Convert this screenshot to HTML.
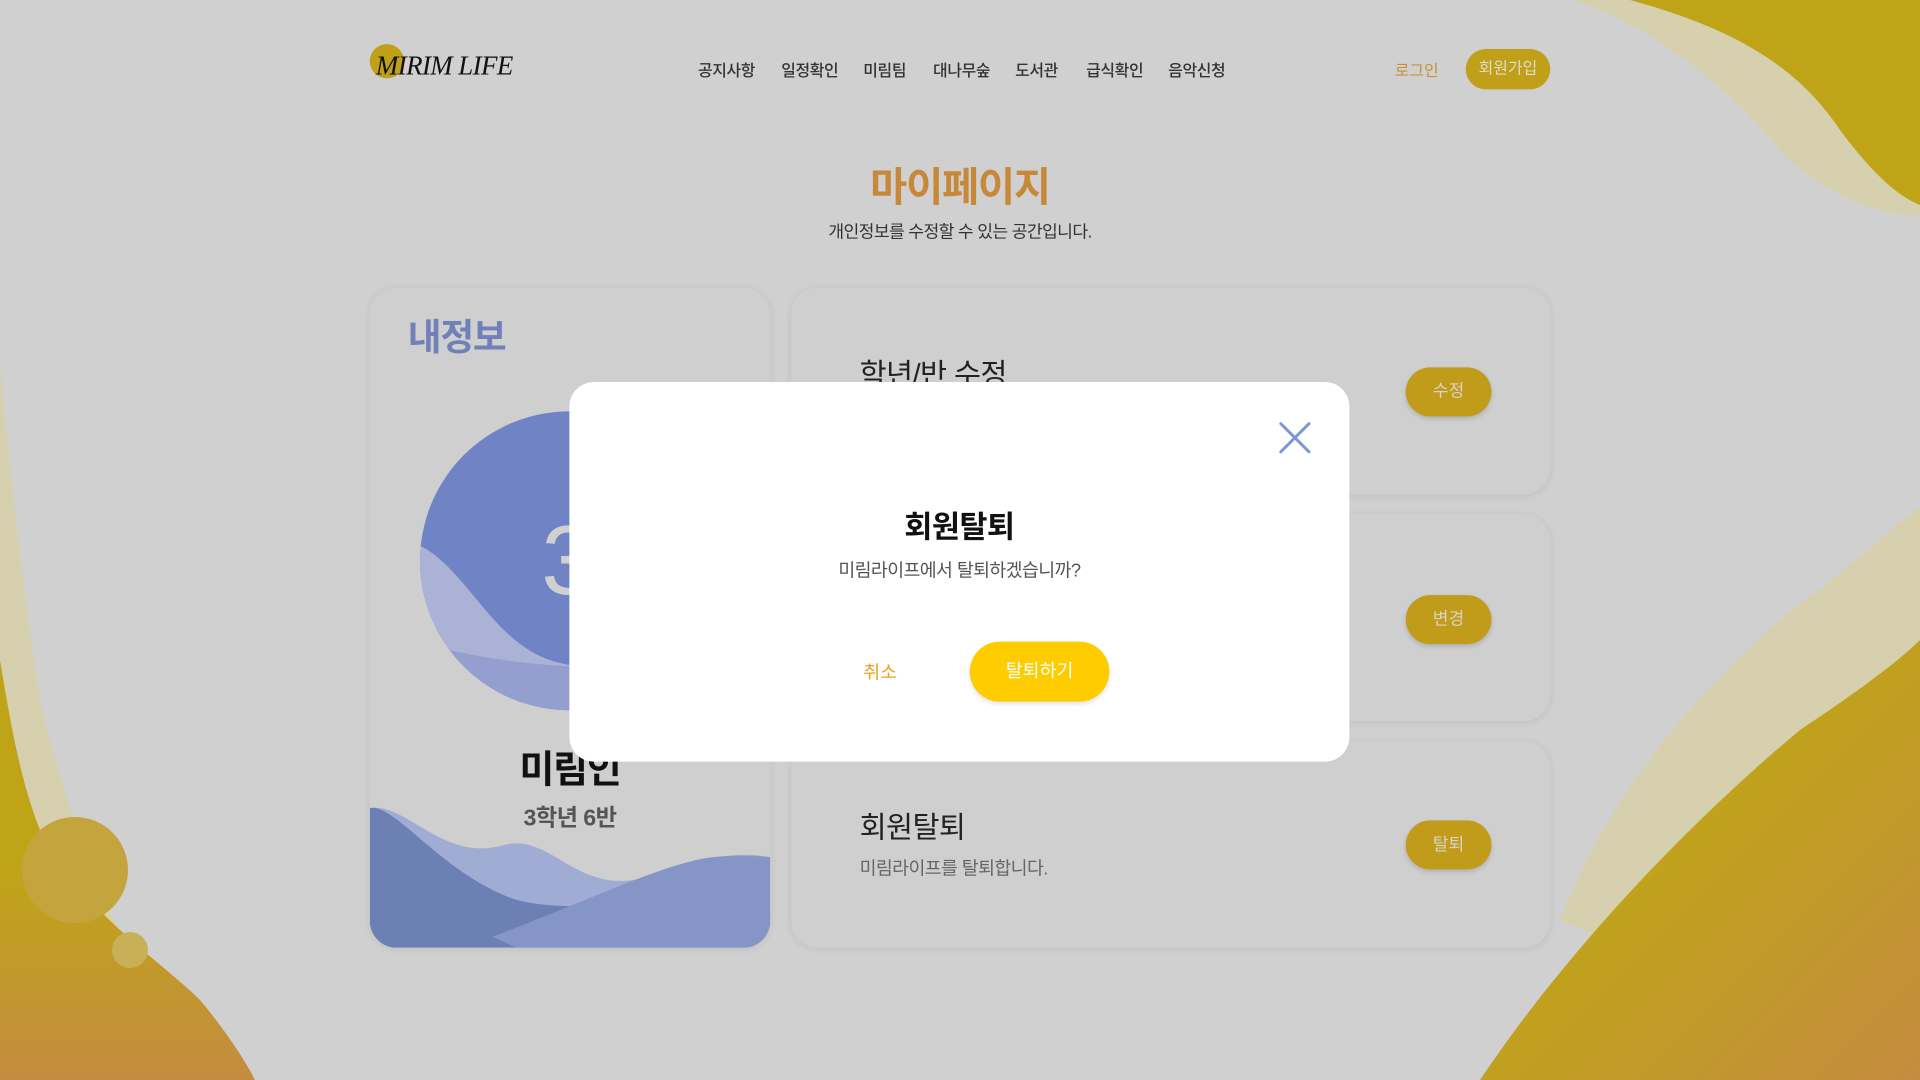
<!DOCTYPE html>
<html><head><meta charset="utf-8"><style>
html,body{margin:0;padding:0;width:1920px;height:1080px;overflow:hidden;background:#d0d0d0;font-family:"Liberation Sans","Noto Sans CJK KR",sans-serif;}
#bg{position:absolute;left:0;top:0;}
#w{position:absolute;left:0;top:0;width:1568px;height:882px;transform:scale(1.22449);transform-origin:0 0;}
.a{position:absolute;white-space:nowrap;}
.nav{top:47px;font-size:13px;color:#333;font-weight:500;letter-spacing:-0.3px;}
.card{position:absolute;background:#cfcfcf;border-radius:22px;box-shadow:0 1px 6px rgba(0,0,0,.08);overflow:hidden;}
.btn{position:absolute;left:502px;width:70px;height:40px;border-radius:20px;background:#c09c1a;color:#d8d4c8;font-size:14px;text-align:center;line-height:39px;box-shadow:0 2px 4px rgba(0,0,0,.15);}
</style></head><body>
<svg id="bg" width="1920" height="1080" viewBox="0 0 1920 1080">
<defs>
<linearGradient id="g1" x1="0" y1="0" x2="1" y2="1"><stop offset="0.4" stop-color="#c0a418"/><stop offset="1" stop-color="#c48c40"/></linearGradient>
<linearGradient id="g2" x1="0" y1="0" x2="0" y2="1"><stop offset="0.5" stop-color="#c0a418"/><stop offset="1" stop-color="#c48c40"/></linearGradient>
</defs>
<path d="M1575 0 C1660 30 1730 90 1780 150 C1830 200 1880 215 1920 215 L1920 0Z" fill="#d6d0ae"/>
<path d="M1630 0 C1740 30 1800 70 1840 130 C1870 170 1895 195 1920 205 L1920 0Z" fill="#c0a418"/>
<path d="M1560 920 C1610 790 1700 690 1780 620 C1850 565 1900 525 1920 505 L1920 1080 Z" fill="#d6d0ae"/>
<path d="M1480 1080 C1560 960 1680 830 1800 730 C1860 690 1900 660 1920 640 L1920 1080Z" fill="url(#g1)"/>
<path d="M0 360 C10 480 25 600 40 700 C70 820 100 900 125 940 L0 940Z" fill="#d6d0ae"/>
<path d="M0 660 C10 720 20 780 40 830 C80 910 160 960 200 1000 C225 1030 245 1060 255 1080 L0 1080Z" fill="url(#g2)"/>
<circle cx="75" cy="870" r="53" fill="#c4a43c"/>
<circle cx="130" cy="950" r="18" fill="#c8b058"/>
</svg>
<div id="w">
<div class="a" style="left:302px;top:36px;width:28px;height:28px;border-radius:50%;background:#c0a018;"></div>
<div class="a" style="left:307px;top:41px;font-family:'Liberation Serif',serif;font-style:italic;font-size:22px;color:#111;letter-spacing:-0.5px;">MIRIM LIFE</div>
<div class="a nav" style="left:570px">공지사항</div>
<div class="a nav" style="left:638px">일정확인</div>
<div class="a nav" style="left:705px">미림팀</div>
<div class="a nav" style="left:762px">대나무숲</div>
<div class="a nav" style="left:829px">도서관</div>
<div class="a nav" style="left:887px">급식확인</div>
<div class="a nav" style="left:954px">음악신청</div>
<div class="a" style="left:1139px;top:47px;font-size:13px;color:#c8903a;">로그인</div>
<div class="a" style="left:1197px;top:40px;width:69px;height:33px;border-radius:17px;background:#c0a018;color:#e0dcc8;font-size:13px;text-align:center;line-height:32px;">회원가입</div>
<div class="a" style="left:0;width:1568px;text-align:center;top:126px;font-size:33px;font-weight:bold;color:#c8883a;letter-spacing:-1px;">마이페이지</div>
<div class="a" style="left:0;width:1568px;text-align:center;top:179px;font-size:14px;color:#333;letter-spacing:-0.5px;">개인정보를 수정할 수 있는 공간입니다.</div>

<div class="card" style="left:302px;top:235px;width:327px;height:539px;">
 <div class="a" style="left:31px;top:16px;font-size:30px;font-weight:bold;color:#7080b8;letter-spacing:-1px;">내정보</div>
 <svg class="a" style="left:0;top:0" width="327" height="539">
  <defs><clipPath id="cc"><circle cx="163" cy="223" r="122"/></clipPath></defs>
  <g clip-path="url(#cc)">
   <rect x="0" y="0" width="327" height="539" fill="#7083c5"/>
   <path d="M40 210 C80 230 100 290 150 305 C200 320 260 300 300 280 L300 360 L40 360Z" fill="#aab2d6"/>
   <path d="M40 290 C100 305 180 320 300 300 L300 360 L40 360Z" fill="#949fd0"/>
  </g>
  <text x="140" y="250" font-size="80" fill="#d0d0d0" font-family="Liberation Sans">3</text>
  <path d="M0 425 C30 420 60 470 110 455 C150 445 170 500 230 480 C270 465 300 460 327 465 L327 539 L0 539Z" fill="#a0acd4"/>
  <path d="M0 425 C20 420 60 480 120 500 C180 515 250 490 327 510 L327 539 L0 539Z" fill="#6d80b3"/>
  <path d="M100 530 C180 500 240 470 280 465 C300 463 315 464 327 465 L327 539 L120 539Z" fill="#8596c6"/>
 </svg>
 <div class="a" style="left:0;width:327px;text-align:center;top:368px;font-size:31px;font-weight:bold;color:#111;letter-spacing:-1px;">미림인</div>
 <div class="a" style="left:0;width:327px;text-align:center;top:418px;font-size:19px;font-weight:bold;color:#555;letter-spacing:-0.5px;">3학년 6반</div>
</div>

<div class="card" style="left:646px;top:235px;width:620px;height:169px;">
 <div class="a" style="left:56px;top:51px;font-size:24px;color:#222;letter-spacing:-0.5px;">학년/반 수정</div>
 <div class="btn" style="top:65px">수정</div>
</div>
<div class="card" style="left:646px;top:420px;width:620px;height:169px;">
 <div class="btn" style="top:66px">변경</div>
</div>
<div class="card" style="left:646px;top:605px;width:620px;height:169px;">
 <div class="a" style="left:56px;top:51px;font-size:24px;color:#222;letter-spacing:-0.5px;">회원탈퇴</div>
 <div class="a" style="left:56px;top:93px;font-size:15px;color:#666;letter-spacing:-0.5px;">미림라이프를 탈퇴합니다.</div>
 <div class="btn" style="top:65px">탈퇴</div>
</div>

<div class="a" style="left:465px;top:312px;width:637px;height:310px;background:#fff;border-radius:20px;">
 <svg class="a" style="left:579px;top:32px" width="27" height="27"><path d="M2 2L25 25M25 2L2 25" stroke="#7a98d8" stroke-width="2.4" stroke-linecap="round"/></svg>
 <div class="a" style="left:0;width:637px;text-align:center;top:99px;font-size:25px;font-weight:bold;color:#111;letter-spacing:-0.5px;">회원탈퇴</div>
 <div class="a" style="left:0;width:637px;text-align:center;top:143px;font-size:15px;color:#555;letter-spacing:-0.5px;">미림라이프에서 탈퇴하겠습니까?</div>
 <div class="a" style="left:240px;top:226px;font-size:15px;color:#f0a020;">취소</div>
 <div class="a" style="left:327px;top:212px;width:114px;height:49px;border-radius:25px;background:#ffcc00;color:#fff;font-size:15px;text-align:center;line-height:49px;box-shadow:0 2px 4px rgba(0,0,0,.12);">탈퇴하기</div>
</div>
</div>
</body></html>
